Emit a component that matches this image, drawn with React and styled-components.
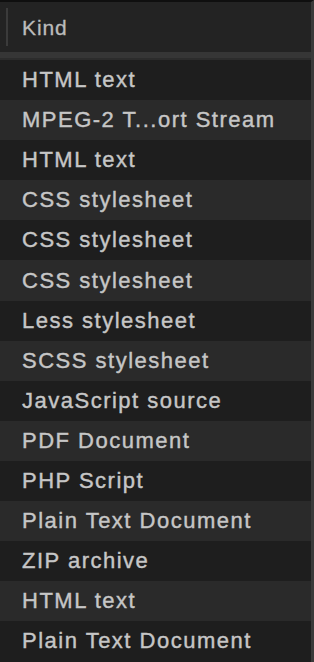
import React from 'react';
import styled, { createGlobalStyle } from 'styled-components';

const kinds = [
  'HTML text',
  'MPEG-2 T...ort Stream',
  'HTML text',
  'CSS stylesheet',
  'CSS stylesheet',
  'CSS stylesheet',
  'Less stylesheet',
  'SCSS stylesheet',
  'JavaScript source',
  'PDF Document',
  'PHP Script',
  'Plain Text Document',
  'ZIP archive',
  'HTML text',
  'Plain Text Document',
];

const GlobalStyle = createGlobalStyle`
  html, body {
    margin: 0;
    padding: 0;
    background: #1e1e1e;
  }
  body {
    font-family: "Liberation Sans", Arial, sans-serif;
    -webkit-font-smoothing: antialiased;
  }
`;

const Table = styled.div`
  width: 314px;
  height: 662px;
  box-sizing: border-box;
  display: flex;
  flex-direction: column;
  border-top: 2px solid #0f0f0f;
  border-right: 3px solid #3a3a3a;
  overflow: hidden;
`;

const Header = styled.div`
  height: 50px;
  flex-shrink: 0;
  display: flex;
  align-items: center;
  padding-left: 6px;
  background: #232323;
  border-bottom: 6px solid #363636;
  box-shadow: 0 2px 0 #2c2c2c;
  margin-bottom: 2px;
`;

const Divider = styled.div`
  width: 2px;
  height: 38px;
  background: #3b3b3b;
  margin-right: 14px;
`;

const HeaderLabel = styled.span`
  color: #bcbcbc;
  font-size: 21px;
  letter-spacing: 0.9px;
  padding-top: 2px;
  -webkit-text-stroke: 0.3px #bcbcbc;
`;

const Row = styled.div`
  height: 40.1px;
  flex-shrink: 0;
  display: flex;
  align-items: center;
  padding-left: 22px;
  background: ${p => (p.$alt ? '#2a2a2a' : '#1e1e1e')};
  color: #c6c6c6;
  font-size: 22px;
  letter-spacing: 1.5px;
  white-space: nowrap;
  -webkit-text-stroke: 0.4px #c6c6c6;
`;

export default function App() {
  return (
    <>
      <GlobalStyle />
      <Table>
        <Header>
          <Divider />
          <HeaderLabel>Kind</HeaderLabel>
        </Header>
        {kinds.map((k, i) => (
          <Row key={i} $alt={i % 2 === 1}>
            {k}
          </Row>
        ))}
      </Table>
    </>
  );
}
